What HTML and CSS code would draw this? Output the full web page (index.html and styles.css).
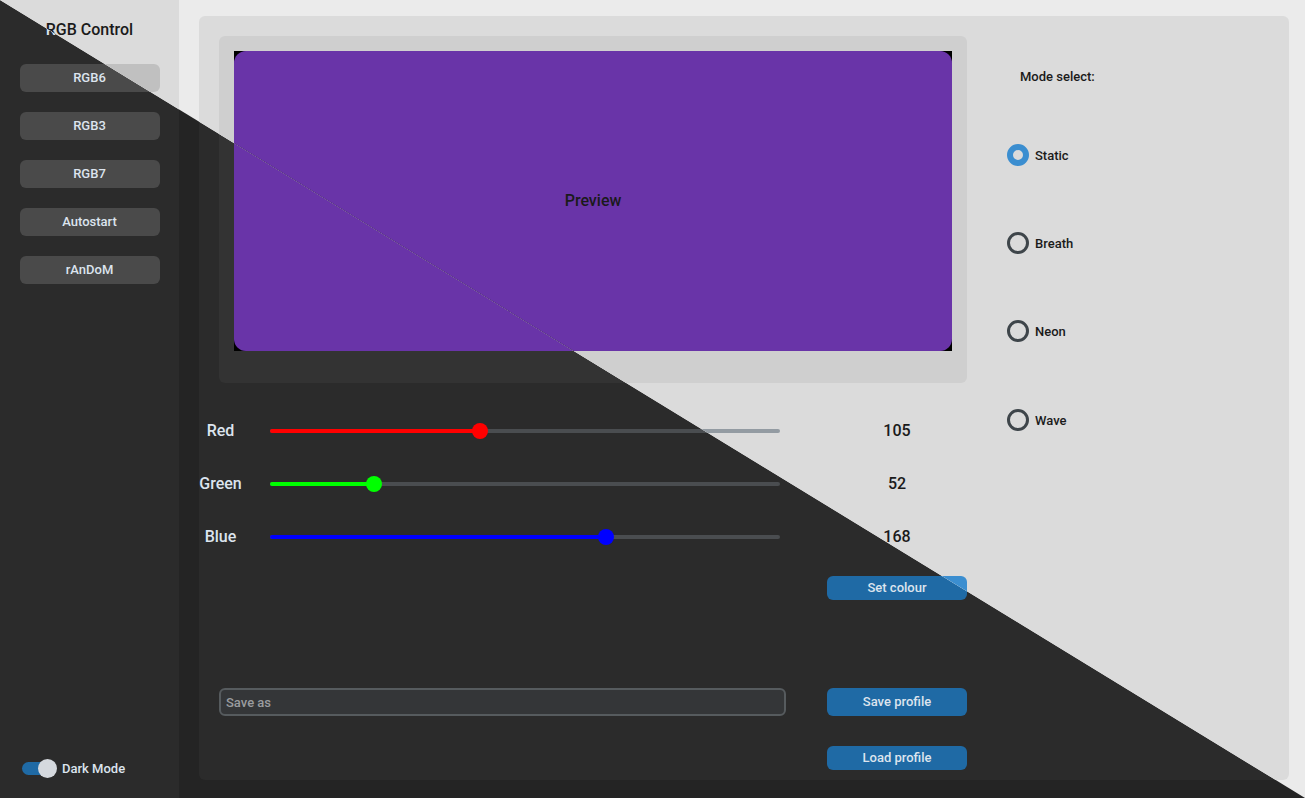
FILE: index.html
```html
<!DOCTYPE html>
<html>
<head>
<meta charset="utf-8">
<title>RGB Control</title>
<link rel="stylesheet" href="styles.css">
</head>
<body>
<div class="app dark">
  <aside class="sidebar">
    <div class="title">RGB Control</div>
    <div class="sbtn">RGB6</div>
    <div class="sbtn">RGB3</div>
    <div class="sbtn">RGB7</div>
    <div class="sbtn">Autostart</div>
    <div class="sbtn">rAnDoM</div>
    <div class="switch-row">
      <div class="switch"><span class="knob"></span></div>
      <span class="switch-label">Dark Mode</span>
    </div>
  </aside>
  <main class="main">
    <section class="left">
      <div class="preview-frame">
        <div class="preview-box"><div class="preview-color">Preview</div></div>
      </div>
      <div class="sliders">
        <div class="slider-row">
          <span class="slabel">Red</span>
          <div class="slider"><div class="track"><div class="fill red" style="width:210px"><span class="thumb"></span></div></div></div>
          <span class="svalue">105</span>
        </div>
        <div class="slider-row">
          <span class="slabel">Green</span>
          <div class="slider"><div class="track"><div class="fill green" style="width:104px"><span class="thumb"></span></div></div></div>
          <span class="svalue">52</span>
        </div>
        <div class="slider-row">
          <span class="slabel">Blue</span>
          <div class="slider"><div class="track"><div class="fill blue" style="width:336px"><span class="thumb"></span></div></div></div>
          <span class="svalue">168</span>
        </div>
      </div>
      <div class="btn set-btn">Set colour</div>
      <div class="save-row">
        <input class="entry" type="text" placeholder="Save as">
        <div class="btn save-btn">Save profile</div>
      </div>
      <div class="btn load-btn">Load profile</div>
    </section>
    <section class="right">
      <div class="mode-label">Mode select:</div>
      <div class="radio checked"><span class="circle"></span><span class="rlabel">Static</span></div>
      <div class="radio"><span class="circle"></span><span class="rlabel">Breath</span></div>
      <div class="radio"><span class="circle"></span><span class="rlabel">Neon</span></div>
      <div class="radio last"><span class="circle"></span><span class="rlabel">Wave</span></div>
    </section>
  </main>
</div>
<div class="app light">
  <aside class="sidebar">
    <div class="title">RGB Control</div>
    <div class="sbtn">RGB6</div>
    <div class="sbtn">RGB3</div>
    <div class="sbtn">RGB7</div>
    <div class="sbtn">Autostart</div>
    <div class="sbtn">rAnDoM</div>
    <div class="switch-row">
      <div class="switch"><span class="knob"></span></div>
      <span class="switch-label">Dark Mode</span>
    </div>
  </aside>
  <main class="main">
    <section class="left">
      <div class="preview-frame">
        <div class="preview-box"><div class="preview-color">Preview</div></div>
      </div>
      <div class="sliders">
        <div class="slider-row">
          <span class="slabel">Red</span>
          <div class="slider"><div class="track"><div class="fill red" style="width:210px"><span class="thumb"></span></div></div></div>
          <span class="svalue">105</span>
        </div>
        <div class="slider-row">
          <span class="slabel">Green</span>
          <div class="slider"><div class="track"><div class="fill green" style="width:104px"><span class="thumb"></span></div></div></div>
          <span class="svalue">52</span>
        </div>
        <div class="slider-row">
          <span class="slabel">Blue</span>
          <div class="slider"><div class="track"><div class="fill blue" style="width:336px"><span class="thumb"></span></div></div></div>
          <span class="svalue">168</span>
        </div>
      </div>
      <div class="btn set-btn">Set colour</div>
      <div class="save-row">
        <input class="entry" type="text" placeholder="Save as">
        <div class="btn save-btn">Save profile</div>
      </div>
      <div class="btn load-btn">Load profile</div>
    </section>
    <section class="right">
      <div class="mode-label">Mode select:</div>
      <div class="radio checked"><span class="circle"></span><span class="rlabel">Static</span></div>
      <div class="radio"><span class="circle"></span><span class="rlabel">Breath</span></div>
      <div class="radio"><span class="circle"></span><span class="rlabel">Neon</span></div>
      <div class="radio last"><span class="circle"></span><span class="rlabel">Wave</span></div>
    </section>
  </main>
</div>
</body>
</html>
```

FILE: styles.css
```css
* { box-sizing: border-box; margin: 0; padding: 0; }
html, body { width: 1305px; height: 798px; overflow: hidden; }
body { position: relative; font-family: Roboto, "Noto Sans", sans-serif; }

.dark {
  --win: #242424; --frame: #2b2b2b; --frame2: #333333; --text: #dce4ee;
  --sbtn: #4a4a4a; --sbtn-text: #dce4ee; --track: #4a4d50; --accent: #1f6aa5;
  --entry-bg: #343638; --entry-border: #565b5e; --placeholder: #9a9c9f; --radio: #949a9f;
  --hole: #2b2b2b;
}
.light {
  --win: #ebebeb; --frame: #dbdbdb; --frame2: #cfcfcf; --text: #1a1a1a;
  --sbtn: #c0c0c0; --sbtn-text: #1a1a1a; --track: #939ba2; --accent: #3b8ed0;
  --entry-bg: #f9f9fa; --entry-border: #979da2; --placeholder: #737373; --radio: #3e454a;
  --hole: #dbdbdb;
}

.app { width: 1305px; height: 798px; display: flex; background: var(--win); color: var(--text); }
.app.light { position: absolute; top: 0; left: 0; clip-path: polygon(0 0, 100% 0, 100% 100%); }

/* sidebar */
.sidebar { width: 179px; flex: none; background: var(--frame); display: flex; flex-direction: column; align-items: center; padding: 20px 0 21px; }
.title { font-size: 16px; line-height: 20px; font-weight: 500; margin-bottom: 24px; }
.sbtn { width: 140px; height: 28px; line-height: 28px; border-radius: 6px; background: var(--sbtn); color: var(--sbtn-text); text-align: center; font-size: 13px; font-weight: 500; margin-bottom: 20px; }
.switch-row { margin-top: auto; align-self: flex-start; padding-left: 22px; display: flex; align-items: center; height: 18px; }
.switch { position: relative; width: 34px; height: 13px; border-radius: 7px; background: var(--accent); }
.knob { position: absolute; right: -1px; top: -3px; width: 19px; height: 19px; border-radius: 50%; background: #d5d9de; }
.switch-label { margin-left: 6px; font-size: 13px; font-weight: 500; }

/* main */
.main { flex: 1; margin: 16px 16px 18px 20px; background: var(--frame); border-radius: 6px; display: flex; }
.left { width: 768px; flex: none; display: flex; flex-direction: column; }
.preview-frame { margin: 20px 0 0 20px; width: 748px; height: 347px; background: var(--frame2); border-radius: 6px; padding: 15px; }
.preview-box { width: 718px; height: 300px; background: #000; }
.preview-color { width: 100%; height: 100%; border-radius: 12px; background: rgb(105, 52, 168); display: flex; align-items: center; justify-content: center; font-size: 16px; font-weight: 500; padding-bottom: 2px; }

.sliders { margin-top: 21px; }
.slider-row { height: 53px; display: grid; grid-template-columns: 43px 28px 510px 47px 140px; align-items: center; }
.slabel { grid-column: 1; text-align: center; font-size: 16px; font-weight: 500; }
.slider { grid-column: 3; height: 16px; display: flex; align-items: center; }
.track { width: 510px; height: 4px; border-radius: 2px; background: var(--track); }
.fill { position: relative; height: 4px; border-radius: 2px; }
.fill.red { background: #ff0000; }
.fill.green { background: #00ff00; }
.fill.blue { background: #0000ff; }
.thumb { position: absolute; right: -8px; top: -6px; width: 16px; height: 16px; border-radius: 50%; background: inherit; }
.svalue { grid-column: 5; text-align: center; font-size: 16px; font-weight: 500; }

.btn { width: 140px; border-radius: 6px; background: var(--accent); color: #dce4ee; text-align: center; font-size: 13px; font-weight: 500; }
.set-btn { margin: 13px 0 0 628px; height: 24px; line-height: 24px; }
.save-row { margin-top: 88px; display: flex; }
.entry { margin-left: 20px; width: 567px; height: 28px; border: 2px solid var(--entry-border); border-radius: 6px; background: var(--entry-bg); padding-left: 5px; font-family: Roboto, "Noto Sans", sans-serif; font-size: 13px; font-weight: 500; color: var(--text); outline: none; }
.entry::placeholder { color: var(--placeholder); }
.save-btn { margin-left: 41px; height: 28px; line-height: 28px; }
.load-btn { margin: 30px 0 0 628px; height: 24px; line-height: 24px; }

.right { display: flex; flex-direction: column; padding-left: 40px; }
.mode-label { margin-top: 53px; padding-left: 13px; font-size: 13px; line-height: 16px; font-weight: 500; }
.radio { display: flex; align-items: center; height: 22px; margin-top: 66px; }
.radio:nth-child(2) { margin-top: 59px; }
.radio.last { margin-top: 67px; }
.circle { width: 22px; height: 22px; border-radius: 50%; border: 3px solid var(--radio); background: var(--hole); }
.radio.checked .circle { border: 6px solid var(--accent); }
.rlabel { margin-left: 6px; font-size: 13px; font-weight: 500; }
```
